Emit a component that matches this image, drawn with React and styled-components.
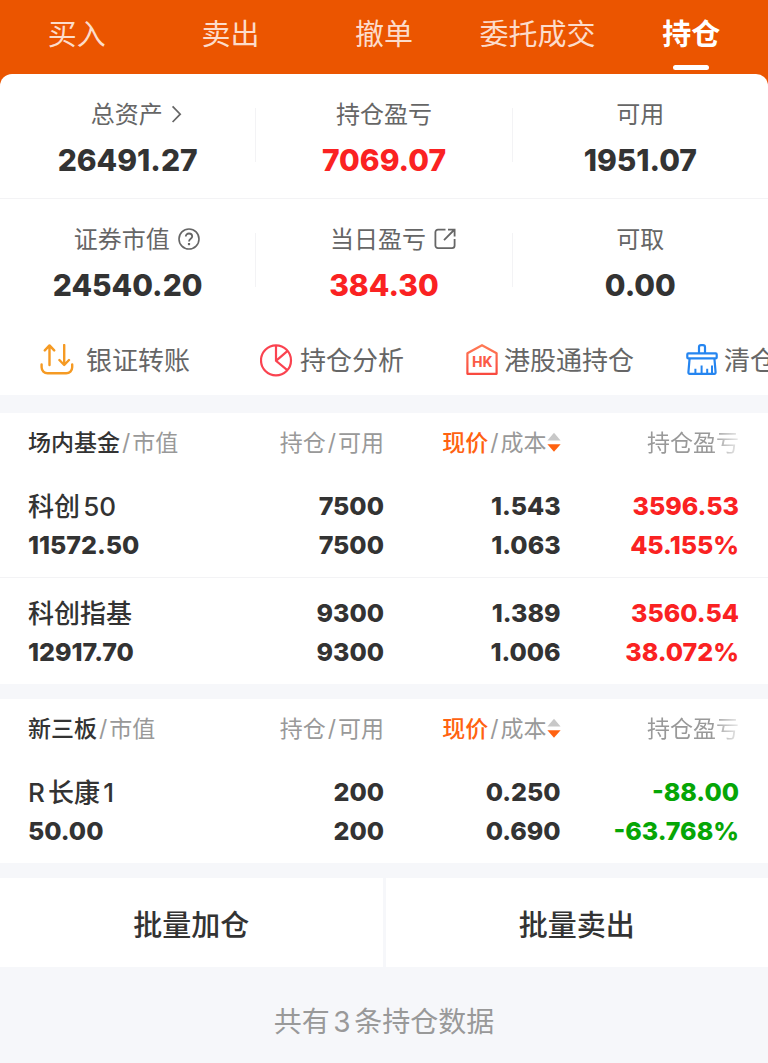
import React, { useState } from 'react';
import styled, { createGlobalStyle } from 'styled-components';

const GlobalStyle = createGlobalStyle`
  * {
    box-sizing: border-box;
  }
  body {
    margin: 0;
    background-color: #f6f7fa;
    color: #333333;
    font-family: Inter, 'Noto Sans CJK SC', sans-serif;
    text-autospace: normal;
    overflow-x: hidden;
  }
  button {
    border: none;
    background: none;
    padding: 0;
    color: inherit;
    font: inherit;
    cursor: pointer;
  }
`;

const TopArea = styled.header`
  background: #eb5500;
`;

const TabBar = styled.nav`
  display: grid;
  grid-template-columns: repeat(5, 1fr);
`;

const Tab = styled.button`
  display: flex;
  flex-direction: column;
  align-items: center;
  gap: 10px;
  height: 74px;
  padding-top: 15px;
  font-size: 29px;
  line-height: 40px;
  white-space: nowrap;
  font-weight: ${(props) => (props.$active ? 700 : 400)};
  color: ${(props) => (props.$active ? '#ffffff' : '#fcdccb')};
`;

const TabLine = styled.span`
  width: 36px;
  height: 5px;
  border-radius: 3px;
  background: #ffffff;
`;

const SummaryCard = styled.section`
  background: #ffffff;
  border-radius: 12px 12px 0 0;
`;

const SummaryRow = styled.div`
  display: grid;
  grid-template-columns: 1fr 1px 1fr 1px 1fr;

  & + & {
    border-top: 1px solid #f3f3f5;
  }
`;

const SummaryDivider = styled.span`
  margin: 34px 0 36px;
  background: #f3f3f5;
`;

const SummaryCell = styled.div`
  display: flex;
  flex-direction: column;
  align-items: center;
  gap: 13px;
  padding: 27px 0 20px;
`;

const SummaryLabel = styled.div`
  display: flex;
  align-items: center;
  gap: 8px;
  padding-left: ${(props) => (props.$icon ? '18px' : '0')};
  height: 28px;
  font-size: 24px;
  line-height: 28px;
  color: #666666;

  svg {
    display: block;
  }
`;

const SummaryValue = styled.div`
  font-size: 30px;
  line-height: 36px;
  font-weight: 800;
  color: ${(props) => (props.$up ? '#fa2222' : '#333333')};
`;

const ShortcutBar = styled.nav`
  display: grid;
  grid-template-columns: 220px 206px 220px auto;
  align-items: center;
  height: 72px;
  padding: 3px 0 0 40px;
  overflow: hidden;
`;

const Shortcut = styled.button`
  display: flex;
  align-items: center;
  gap: ${(props) => (props.$wide ? '12px' : '6px')};
  font-size: 26px;
  line-height: 36px;
  white-space: nowrap;
  color: #666666;

  svg {
    flex: none;
  }
`;

const HoldingSection = styled.section`
  margin-top: ${(props) => (props.$first ? '18px' : '15px')};
  background: #ffffff;
`;

const HoldingTable = styled.table`
  width: 100%;
  table-layout: fixed;
  border-collapse: collapse;
`;

const HeadCell = styled.th`
  width: ${(props) => props.$width};
  height: 58px;
  padding: ${(props) => (props.$name ? '2px 0 0 28px' : '2px 0 0')};
  text-align: ${(props) => (props.$name ? 'left' : 'right')};
  font-size: 23px;
  line-height: 32px;
  font-weight: 400;
  white-space: nowrap;
  color: #999999;

  &:last-child {
    padding-right: 29px;
  }
`;

const HeadName = styled.span`
  font-weight: 500;
  color: #333333;
`;

const Slash = styled.span`
  margin: 0 2px;
`;

const SortButton = styled.button`
  display: inline-flex;
  align-items: center;
  vertical-align: top;
`;

const SortActive = styled.span`
  font-weight: 500;
  color: #ff6210;
`;

const FadeText = styled.span`
  mask-image: linear-gradient(90deg, #000 70%, rgba(0, 0, 0, 0.2) 100%);
`;

const HoldingRow = styled.tr`
  & + & {
    border-top: 1px solid #f3f3f5;
  }
`;

const HoldingCell = styled.td`
  padding: ${(props) => (props.$name ? '16px 0 12px 28px' : '16px 0 12px')};
  text-align: ${(props) => (props.$name ? 'left' : 'right')};
  font-size: 26px;
  line-height: 39px;
  font-weight: 800;
  white-space: nowrap;
  color: ${(props) => props.$color || '#333333'};

  &:last-child {
    padding-right: 29px;
  }
`;

const Line = styled.div`
  height: 39px;
  font-size: 25px;
`;

const StockName = styled.div`
  height: 39px;
  font-weight: 500;
`;

const BatchBar = styled.div`
  display: grid;
  grid-template-columns: 1fr 1fr;
  gap: 3px;
  margin-top: 15px;
`;

const BatchButton = styled.button`
  height: 89px;
  background: #ffffff;
  font-size: 29px;
  font-weight: 500;
  color: #333333;
`;

const CountText = styled.p`
  margin: 0;
  padding: 35px 0 21px;
  text-align: center;
  font-size: 28px;
  line-height: 40px;
  color: #999999;
`;

const ChevronIcon = () => (
  <svg width="12" height="20" viewBox="0 0 12 20" fill="none" stroke="#666" strokeWidth="1.7">
    <path d="M1.6 1.4l7.6 7.8-7.6 7.8" />
  </svg>
);

const QuestionIcon = () => (
  <svg width="22" height="24" viewBox="0 0 22 24" fill="none" stroke="#666" strokeWidth="1.6">
    <circle cx="11" cy="11" r="10" />
    <path d="M7.8 8.6c0-1.9 1.3-3.1 3.2-3.1s3.2 1.2 3.2 2.9c0 2.3-3.2 2.4-3.2 5" strokeWidth="1.8" />
    <path d="M11 15v2.2" strokeWidth="2.2" />
  </svg>
);

const ShareIcon = () => (
  <svg width="22" height="24" viewBox="0 0 22 24" fill="none" stroke="#666" strokeWidth="1.8">
    <path d="M11.5 1.6H4a2.6 2.6 0 0 0-2.6 2.6v13.4A2.6 2.6 0 0 0 4 20.2h14a2.6 2.6 0 0 0 2.6-2.6V11" />
    <path d="M10 12.2L20 2M14 1.6h6.6v6.8" />
  </svg>
);

const TransferIcon = () => (
  <svg width="34" height="34" viewBox="0 0 34 34" fill="none" stroke="#f59a23" strokeWidth="2.4" strokeLinecap="round" strokeLinejoin="round">
    <path d="M9.5 21V2M4.8 6.4L9.5 1.4l4.7 5" />
    <path d="M24.2 1v19.4M19.4 16l4.8 5 4.8-5" />
    <path d="M1.6 20.5v2.8a6 6 0 0 0 6 6h18.6a6 6 0 0 0 6-6v-2.8" />
  </svg>
);

const PieIcon = () => (
  <svg width="34" height="34" viewBox="0 0 34 34" fill="none" stroke="#fa4350" strokeWidth="2.2">
    <circle cx="16" cy="16.4" r="15" />
    <path d="M16 1.4v15.4L27.6 26.4M16 16.8L27.6 6.8" />
  </svg>
);

const HkIcon = () => (
  <svg width="32" height="34" viewBox="0 0 32 34" fill="none">
    <defs>
      <linearGradient id="hk" x1="0" y1="0" x2="0" y2="1">
        <stop offset="0" stopColor="#ff7a55" />
        <stop offset="1" stopColor="#f94a40" />
      </linearGradient>
    </defs>
    <path d="M1.4 9.2L16 1.2l14.6 8v20.6H1.4z" stroke="url(#hk)" strokeWidth="2.2" strokeLinejoin="round" />
    <text x="16" y="22.5" textAnchor="middle" fontFamily="Roboto, sans-serif" fontSize="15" fontWeight="700" fill="#fb5a46">
      HK
    </text>
  </svg>
);

const BrushIcon = () => (
  <svg width="32" height="34" viewBox="0 0 32 34" fill="none" stroke="#2585f0" strokeWidth="2.2" strokeLinejoin="round">
    <path d="M13 9.4V3.2a2 2 0 0 1 2-2h2a2 2 0 0 1 2 2v6.2" />
    <rect x="1.3" y="9.4" width="29.4" height="5" rx="1" />
    <path d="M3.6 14.4L2.4 28.4a1.3 1.3 0 0 0 1.3 1.4h24.6a1.3 1.3 0 0 0 1.3-1.4l-1.2-14" />
    <path d="M9.4 29.6v-4.8M15.6 29.6v-8M21.2 29.6v-4.8M26 29.6v-8" strokeWidth="2" />
  </svg>
);

const SortIcon = () => (
  <svg width="14" height="22" viewBox="0 0 14 22">
    <path d="M7 .8L13.6 8.6H.4z" fill="#c8c8c8" />
    <path d="M7 19.8L.4 12.2h13.2z" fill="#ff6210" />
  </svg>
);

const RED = '#fa2222';
const GREEN = '#06a606';

const tabs = ['买入', '卖出', '撤单', '委托成交', '持仓'];

const summary = [
  [
    { label: '总资产', value: '26491.27', icon: <ChevronIcon /> },
    { label: '持仓盈亏', value: '7069.07', up: true },
    { label: '可用', value: '1951.07' },
  ],
  [
    { label: '证券市值', value: '24540.20', icon: <QuestionIcon /> },
    { label: '当日盈亏', value: '384.30', up: true, icon: <ShareIcon /> },
    { label: '可取', value: '0.00' },
  ],
];

const shortcuts = [
  { label: '银证转账', icon: <TransferIcon />, wide: true },
  { label: '持仓分析', icon: <PieIcon /> },
  { label: '港股通持仓', icon: <HkIcon /> },
  { label: '清仓', icon: <BrushIcon /> },
];

const groups = [
  {
    name: '场内基金',
    rows: [
      { name: '科创50', worth: '11572.50', held: '7500', usable: '7500', price: '1.543', cost: '1.063', profit: '3596.53', rate: '45.155%', color: RED },
      { name: '科创指基', worth: '12917.70', held: '9300', usable: '9300', price: '1.389', cost: '1.006', profit: '3560.54', rate: '38.072%', color: RED },
    ],
  },
  {
    name: '新三板',
    rows: [
      { name: 'R长康1', worth: '50.00', held: '200', usable: '200', price: '0.250', cost: '0.690', profit: '-88.00', rate: '-63.768%', color: GREEN },
    ],
  },
];

const HoldingGroup = ({ group, first }) => (
  <HoldingSection $first={first}>
    <HoldingTable>
      <thead>
        <tr>
          <HeadCell $name $width="27%">
            <HeadName>{group.name}</HeadName>
            <Slash>/</Slash>市值
          </HeadCell>
          <HeadCell $width="23%">
            持仓<Slash>/</Slash>可用
          </HeadCell>
          <HeadCell $width="23%">
            <SortButton type="button">
              <SortActive>现价</SortActive>
              <Slash>/</Slash>成本
              <SortIcon />
            </SortButton>
          </HeadCell>
          <HeadCell $width="27%">
            <FadeText>持仓盈亏</FadeText>
          </HeadCell>
        </tr>
      </thead>
      <tbody>
        {group.rows.map((row) => (
          <HoldingRow key={row.name}>
            <HoldingCell $name>
              <StockName>{row.name}</StockName>
              <Line>{row.worth}</Line>
            </HoldingCell>
            <HoldingCell>
              <Line>{row.held}</Line>
              <Line>{row.usable}</Line>
            </HoldingCell>
            <HoldingCell>
              <Line>{row.price}</Line>
              <Line>{row.cost}</Line>
            </HoldingCell>
            <HoldingCell $color={row.color}>
              <Line>{row.profit}</Line>
              <Line>{row.rate}</Line>
            </HoldingCell>
          </HoldingRow>
        ))}
      </tbody>
    </HoldingTable>
  </HoldingSection>
);

const App = () => {
  const [activeTab, setActiveTab] = useState('持仓');
  const total = groups.reduce((sum, group) => sum + group.rows.length, 0);

  return (
    <>
      <GlobalStyle />
      <TopArea>
        <TabBar>
          {tabs.map((tab) => (
            <Tab key={tab} type="button" $active={tab === activeTab} onClick={() => setActiveTab(tab)}>
              {tab}
              {tab === activeTab && <TabLine />}
            </Tab>
          ))}
        </TabBar>
        <SummaryCard>
          {summary.map((cells, rowIndex) => (
            <SummaryRow key={rowIndex}>
              {cells.map((cell, index) => (
                <React.Fragment key={cell.label}>
                  {index > 0 && <SummaryDivider />}
                  <SummaryCell>
                    <SummaryLabel $icon={Boolean(cell.icon)}>
                      {cell.label}
                      {cell.icon}
                    </SummaryLabel>
                    <SummaryValue $up={cell.up}>{cell.value}</SummaryValue>
                  </SummaryCell>
                </React.Fragment>
              ))}
            </SummaryRow>
          ))}
          <ShortcutBar>
            {shortcuts.map((item) => (
              <Shortcut key={item.label} type="button" $wide={item.wide}>
                {item.icon}
                {item.label}
              </Shortcut>
            ))}
          </ShortcutBar>
        </SummaryCard>
      </TopArea>
      <main>
        {groups.map((group, index) => (
          <HoldingGroup key={group.name} group={group} first={index === 0} />
        ))}
        <BatchBar>
          <BatchButton type="button">批量加仓</BatchButton>
          <BatchButton type="button">批量卖出</BatchButton>
        </BatchBar>
        <CountText>共有{total}条持仓数据</CountText>
      </main>
    </>
  );
};

export default App;
